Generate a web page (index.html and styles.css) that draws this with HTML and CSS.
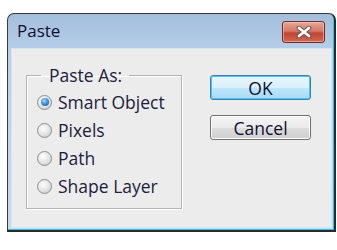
FILE: index.html
```html
<!DOCTYPE html>
<html>
<head>
<meta charset="utf-8">
<link rel="stylesheet" href="styles.css">
</head>
<body>
<div class="window">
  <div class="titlebar">
    <span class="title">Paste</span>
    <button class="close" aria-label="Close">
      <svg width="18" height="12" viewBox="0 0 18 12">
        <path d="M4 2 L14 10 M14 2 L4 10" stroke="#5a5a5a" stroke-width="4.6" stroke-linecap="round"/>
        <path d="M4 2 L14 10 M14 2 L4 10" stroke="#ffffff" stroke-width="2.6" stroke-linecap="round"/>
      </svg>
    </button>
  </div>
  <div class="content">
    <fieldset class="group">
      <legend class="legend">Paste As:</legend>
      <label class="option"><span class="radio checked"></span>Smart Object</label>
      <label class="option"><span class="radio"></span>Pixels</label>
      <label class="option"><span class="radio"></span>Path</label>
      <label class="option"><span class="radio"></span>Shape Layer</label>
    </fieldset>
    <div class="buttons">
      <button class="btn default">OK</button>
      <button class="btn">Cancel</button>
    </div>
  </div>
</div>
</body>
</html>
```

FILE: styles.css
```css
html, body {
  margin: 0;
  padding: 0;
  background: #ffffff;
}
body {
  width: 337px;
  height: 250px;
  font-family: "Open Sans", "DejaVu Sans", sans-serif;
  color: #1c1c3c;
}
.window {
  margin: 13px 0 0 7px;
  width: 321px;
  height: 214px;
  border: 1px solid #3a3a3a;
  border-right: 2px solid #2a2a2a;
  border-bottom: 2px solid #2a2a2a;
  border-radius: 7px 7px 0 0;
  background: linear-gradient(#a3bedc, #b8d0ea 40px, #c6daee);
  padding: 0 2px 2px 3px;
  box-shadow: inset -1px -1px 0 #25c8ec;
  display: flex;
  flex-direction: column;
}
.titlebar {
  height: 34px;
  display: flex;
  align-items: center;
  justify-content: space-between;
  padding: 0 7px 0 6px;
}
.title {
  font-size: 17px;
  color: #101030;
  margin-top: -1px;
}
.close {
  width: 43px;
  height: 22px;
  margin-top: 2px;
  border: 1px solid #6d2b23;
  border-radius: 3px;
  background: linear-gradient(#e8a494, #d77a68 45%, #c2452f 55%, #d0664f);
  box-shadow: inset 0 0 0 1px rgba(255,220,210,0.5);
  display: flex;
  align-items: center;
  justify-content: center;
  padding: 0;
}
.content {
  flex: 1;
  background: #ececec;
  border: 1px solid #d8e4f1;
  display: flex;
  align-items: flex-start;
  padding: 16px 0 0 14px;
}
.group {
  margin: 0;
  width: 156px;
  height: 144px;
  border: 1px solid #b4b4b4;
  box-shadow: 1px 1px 0 #ffffff, inset 1px 1px 0 #ffffff;
  padding: 3px 0 0 10px;
  box-sizing: border-box;
}
.legend {
  font-size: 17.5px;
  margin-left: 4px;
  padding: 0 7px 0 8px;
  line-height: 20px;
}
.option {
  display: flex;
  align-items: center;
  height: 28px;
  font-size: 17.5px;
}
.radio {
  flex-shrink: 0;
  width: 15px;
  height: 15px;
  border-radius: 50%;
  border: 1px solid #8e8e8e;
  background: radial-gradient(circle at 40% 35%, #ffffff, #e2e2e2 55%, #c4c4c4);
  box-sizing: border-box;
  margin-right: 6px;
  position: relative;
}
.radio.checked::after {
  content: "";
  position: absolute;
  left: 2.5px;
  top: 2.5px;
  width: 8px;
  height: 8px;
  border-radius: 50%;
  background: radial-gradient(circle at 40% 35%, #9ad8ff, #2a7fcf 60%, #0d4f99);
}
.buttons {
  display: flex;
  flex-direction: column;
  gap: 15px;
  margin: 10px 0 0 28px;
}
.btn {
  width: 101px;
  height: 25px;
  box-sizing: border-box;
  font-family: "Open Sans", "DejaVu Sans", sans-serif;
  font-size: 17.5px;
  color: #101030;
  border: 1px solid #707070;
  border-radius: 3px;
  background: linear-gradient(#f4f4f4, #ebebeb 50%, #dddddd 51%, #cfcfcf);
  box-shadow: inset 0 0 0 1px #fcfcfc;
  padding: 0;
  line-height: 22px;
}
.btn.default {
  border-color: #3c7fb1;
  background: linear-gradient(#eaf6fd, #d9f0fc 50%, #bee6fd 51%, #a7d9f5);
  box-shadow: inset 0 0 0 1px #48c6f4;
}
```
